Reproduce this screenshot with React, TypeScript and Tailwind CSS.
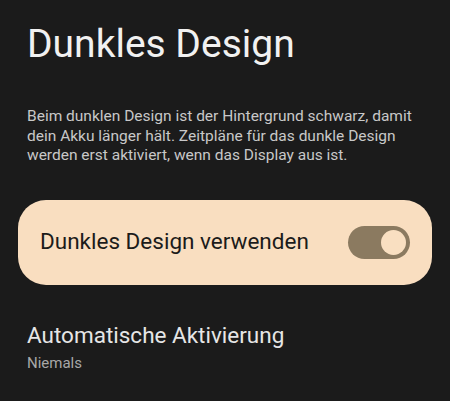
import React, { useState } from 'react';

const font = { fontFamily: 'Roboto, "Noto Sans", sans-serif' };

const Toggle: React.FC<{ on: boolean; onChange: () => void }> = ({ on, onChange }) => (
    <button
        onClick={onChange}
        className={`flex h-[33px] w-[62px] items-center rounded-full px-[4px] ${on ? 'justify-end bg-[#8b7a60]' : 'justify-start bg-[#5a5a5a]'}`}
    >
        <span className="block h-[25px] w-[25px] rounded-full bg-[#f9dfc1]" />
    </button>
);

export default function App() {
    const [enabled, setEnabled] = useState(true);

    return (
        <div className="h-[401px] w-[450px] overflow-hidden bg-[#1b1b1b]" style={font}>
            <div className="px-[27px] pt-[20px]">
                <h1 className="text-[39px] font-normal leading-[48px] text-[#f1f1f1]">Dunkles Design</h1>
                <p className="mr-[-12px] mt-[39px] text-[15.5px] leading-[19.5px] text-[#c8c8c8]">
                    Beim dunklen Design ist der Hintergrund schwarz, damit dein Akku länger hält. Zeitpläne für das dunkle Design werden erst aktiviert, wenn das Display aus ist.
                </p>
            </div>
            <div className="mx-[18px] mt-[34px] flex h-[85px] items-center justify-between rounded-[28px] bg-[#f9dec0] pl-[22px] pr-[22px]">
                <span className="text-[22.5px] text-[#1c1b1a]">Dunkles Design verwenden</span>
                <Toggle on={enabled} onChange={() => setEnabled(v => !v)} />
            </div>
            <div className="px-[27px] pt-[37px]">
                <div className="text-[22.5px] leading-[26px] text-[#e6e6e6]">Automatische Aktivierung</div>
                <div className="mt-[5px] text-[15px] leading-[20px] text-[#a8a8a8]">Niemals</div>
            </div>
        </div>
    );
}
